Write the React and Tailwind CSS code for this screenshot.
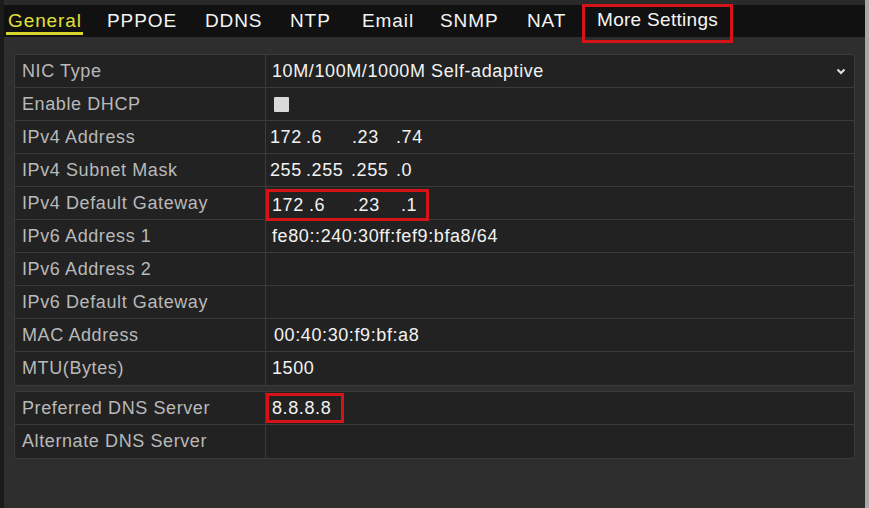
const TABS = [
  { t: 'PPPOE', w: 'w-[98px]' },
  { t: 'DDNS', w: 'w-[85px]' },
  { t: 'NTP', w: 'w-[72px]' },
  { t: 'Email', w: 'w-[78px]' },
  { t: 'SNMP', w: 'w-[87px]' },
  { t: 'NAT', w: 'w-[55px]' },
]

const FONT = { fontFamily: '"Liberation Sans", Arial, sans-serif' }

function Ip({ parts, widths = ['w-[36px]', 'w-[46px]', 'w-[44px]'] }) {
  return (
    <div className="flex">
      <span className={widths[0]}>{parts[0]}</span>
      <span className={widths[1]}>.{parts[1]}</span>
      <span className={widths[2]}>.{parts[2]}</span>
      <span>.{parts[3]}</span>
    </div>
  )
}

function Row({ label, children, last }) {
  return (
    <div className={`flex h-[33px] ${last ? '' : 'border-b border-[#3b3b3b]'}`}>
      <div className="w-[251px] shrink-0 flex items-center pl-[7px] text-[#b9b9b9] border-r border-[#3b3b3b]">
        {label}
      </div>
      <div className="flex-1 flex items-center text-[#f2f2f2]">{children}</div>
    </div>
  )
}

export default function App() {
  return (
    <div className="w-[869px] h-[508px] flex bg-[#2e2e2e] text-[18px] tracking-[0.6px] overflow-hidden" style={FONT}>
      <div className="w-[4px] bg-[#1b1b1b]" />
      <div className="flex-1 flex flex-col">
        <div className="h-[5px] bg-[#2a2a2a]" />
        <div className="h-[32px] bg-[#111111] flex items-start pl-[2px] relative z-10 text-[19px] tracking-[0.9px]">
          <div className="h-[32px] w-[101px] flex items-center">
            <span className="text-[#e2e23a] border-b-[3px] border-[#d6d62a] leading-[22px] pt-[2px] pl-[2px] pr-[1px]">General</span>
          </div>
          {TABS.map(({ t, w }) => (
            <div key={t} className={`h-[32px] flex items-center ${w}`}>
              <span className="text-[#f4f4f4]">{t}</span>
            </div>
          ))}
          <div className="mt-[-1px] h-[39px] w-[151px] border-[3px] border-[#d41418] flex items-center pl-[12px] pb-[6px] text-[#f6f6f6] tracking-[0.3px]">
            More Settings
          </div>
        </div>
        <div className="flex-1 px-[10px] pt-[17px]">
          <div className="rounded-[3px] border border-[#3b3b3b] bg-[#222222]">
            <Row label="NIC Type">
              <div className="flex-1 flex items-center justify-between pl-[6px] pr-[8px]">
                <span>10M/100M/1000M Self-adaptive</span>
                <svg width="10" height="8" viewBox="0 0 10 8">
                  <path d="M1.5 2.5 L5 6 L8.5 2.5" fill="none" stroke="#e0e0e0" strokeWidth="2" />
                </svg>
              </div>
            </Row>
            <Row label="Enable DHCP">
              <div className="ml-[8px] w-[15px] h-[15px] bg-[#d9d9d9] rounded-[1px]" />
            </Row>
            <Row label="IPv4 Address">
              <div className="pl-[4px]"><Ip parts={['172', '6', '23', '74']} /></div>
            </Row>
            <Row label="IPv4 Subnet Mask">
              <div className="pl-[4px]"><Ip parts={['255', '255', '255', '0']} widths={['w-[36px]', 'w-[45px]', 'w-[45px]']} /></div>
            </Row>
            <Row label="IPv4 Default Gateway">
              <div className="w-[163px] h-[32px] mt-[4px] border-[3px] border-[#d41418] flex items-center pl-[3px]">
                <Ip parts={['172', '6', '23', '1']} widths={['w-[37px]', 'w-[44px]', 'w-[48px]']} />
              </div>
            </Row>
            <Row label="IPv6 Address 1">
              <span className="pl-[6px]">fe80::240:30ff:fef9:bfa8/64</span>
            </Row>
            <Row label="IPv6 Address 2" />
            <Row label="IPv6 Default Gateway" />
            <Row label="MAC Address">
              <span className="pl-[8px]">00:40:30:f9:bf:a8</span>
            </Row>
            <Row label="MTU(Bytes)" last>
              <span className="pl-[6px]">1500</span>
            </Row>
          </div>
          <div className="mt-[5px] rounded-[3px] border border-[#3b3b3b] bg-[#222222]">
            <Row label="Preferred DNS Server">
              <div className="w-[78px] h-[30px] border-[3px] border-[#d41418] flex items-center pl-[3px]">8.8.8.8</div>
            </Row>
            <Row label="Alternate DNS Server" last />
          </div>
        </div>
      </div>
      <div className="w-[4px] bg-[#a8a8a8]" />
    </div>
  )
}
